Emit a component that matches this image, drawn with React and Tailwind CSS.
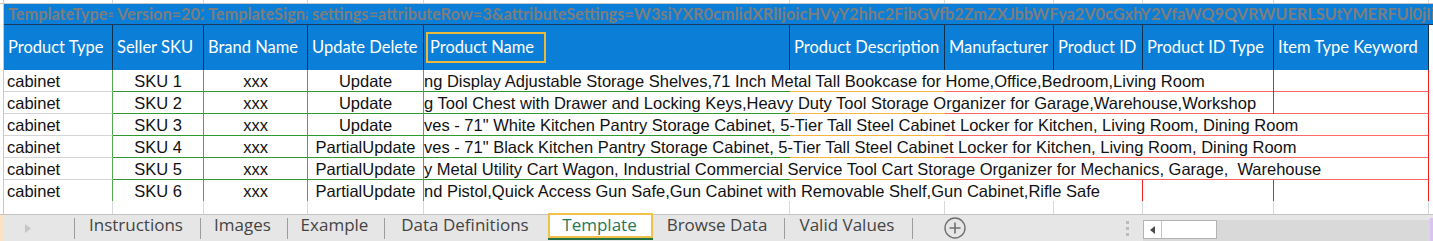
import React from 'react';

const headers = [
  { label: 'Product Type', w: 'w-[109px]' },
  { label: 'Seller SKU', w: 'w-[91px]' },
  { label: 'Brand Name', w: 'w-[104px]' },
  { label: 'Update Delete', w: 'w-[116px]' },
  { label: 'Product Name', w: 'w-[366px]', boxed: true },
  { label: 'Product Description', w: 'w-[155px]' },
  { label: 'Manufacturer', w: 'w-[109px]' },
  { label: 'Product ID', w: 'w-[89px]' },
  { label: 'Product ID Type', w: 'w-[131px]' },
  { label: 'Item Type Keyword', w: 'w-[155px]' },
];

const rows = [
  {
    sku: 'SKU 1',
    op: 'Update',
    span: 'short',
    text: 'ng Display Adjustable Storage Shelves,71 Inch Metal Tall Bookcase for Home,Office,Bedroom,Living Room',
  },
  {
    sku: 'SKU 2',
    op: 'Update',
    span: 'short',
    text: 'g Tool Chest with Drawer and Locking Keys,Heavy Duty Tool Storage Organizer for Garage,Warehouse,Workshop',
  },
  {
    sku: 'SKU 3',
    op: 'Update',
    span: 'long',
    text: 'ves - 71" White Kitchen Pantry Storage Cabinet, 5-Tier Tall Steel Cabinet Locker for Kitchen, Living Room, Dining Room',
  },
  {
    sku: 'SKU 4',
    op: 'PartialUpdate',
    span: 'long',
    text: 'ves - 71" Black Kitchen Pantry Storage Cabinet, 5-Tier Tall Steel Cabinet Locker for Kitchen, Living Room, Dining Room',
  },
  {
    sku: 'SKU 5',
    op: 'PartialUpdate',
    span: 'long',
    text: 'y Metal Utility Cart Wagon, Industrial Commercial Service Tool Cart Storage Organizer for Mechanics, Garage,\u00a0\u00a0Warehouse',
  },
  {
    sku: 'SKU 6',
    op: 'PartialUpdate',
    span: 'none',
    text: 'nd Pistol,Quick Access Gun Safe,Gun Cabinet with Removable Shelf,Gun Cabinet,Rifle Safe',
  },
];

const settings =
  'settings=attributeRow=3&attributeSettings=W3siYXR0cmlidXRlIjoicHVyY2hhc2FibGVfb2ZmZXJbbWFya2V0cGxhY2VfaWQ9QVRWUERLSUtYMERFUl0jIiwiZGF0YVR5cGUiOiJib29sZWFuIn1d';

function Gutter({ className = '' }) {
  return <div className={`w-[4px] shrink-0 border-r border-[#c8c8c8] bg-white ${className}`} />;
}

function TopStrip() {
  return (
    <div className="flex h-[4px] border-b border-[#c8c8c8]">
      <Gutter />
      {headers.map((h) => (
        <div key={h.label} className={`${h.w} shrink-0 border-r border-[#d6d6d6]`} />
      ))}
    </div>
  );
}

function TitleRow() {
  const cell = "shrink-0 overflow-hidden whitespace-nowrap pl-[4px]";
  return (
    <div className="flex h-[21px]">
      <Gutter />
      <div className="flex flex-1 overflow-hidden border-b border-[#163b5e] bg-[#0b7fd7] font-['Lato',sans-serif] text-[16.3px] font-bold leading-[20px] text-[#7d7d7d]">
        <div className={`w-[109px] ${cell}`}>TemplateType=fptcustom</div>
        <div className={`w-[91px] ${cell}`}>Version=2021.0308</div>
        <div className={`w-[104px] ${cell}`}>TemplateSignature=Q0FCSU5FVA==</div>
        <div className="flex-1 overflow-hidden whitespace-nowrap pl-[4px]">{settings}</div>
      </div>
    </div>
  );
}

function HeaderRow() {
  return (
    <div className="flex h-[45px]">
      <Gutter />
      <div className="flex bg-[#0b7fd7] font-['Lato',sans-serif] text-[16.5px] text-white">
        {headers.map((h) => (
          <div
            key={h.label}
            className={`${h.w} flex shrink-0 items-center overflow-hidden whitespace-nowrap border-r border-[#122f4b] ${h.boxed ? 'pl-[2px]' : 'pl-[4px]'}`}
          >
            {h.boxed ? (
              <div className="flex h-[31px] w-[120px] items-center border-2 border-[#e9b83c] pl-[2px]">{h.label}</div>
            ) : (
              h.label
            )}
          </div>
        ))}
      </div>
    </div>
  );
}

function DataRow({ row, last }) {
  const txt = 'whitespace-nowrap overflow-hidden pt-[2px] leading-[19px]';
  const bottom = (color) => (last ? '' : `border-b ${color}`);
  const spanWidth =
    row.span === 'short' ? 'w-[850px]' : row.span === 'long' ? 'w-[1005px]' : 'w-[719px]';

  return (
    <div className={`flex ${last ? 'h-[21px]' : 'h-[22px]'} font-['Liberation_Sans',Arial,sans-serif] text-[16.5px] text-[#111]`}>
      <Gutter />
      <div className={`w-[109px] shrink-0 border-r border-r-[#52a852] pl-[3px] ${txt} ${bottom('border-b-[#d4d4d4]')}`}>
        cabinet
      </div>
      <div className={`w-[91px] shrink-0 border-r border-r-[#52a852] text-center ${txt} ${bottom('border-b-[#2f9a2f]')}`}>
        {row.sku}
      </div>
      <div className={`w-[104px] shrink-0 border-r border-r-[#52a852] text-center ${txt} ${bottom('border-b-[#2f9a2f]')}`}>
        xxx
      </div>
      <div className={`w-[116px] shrink-0 border-r border-r-[#52a852] text-center ${txt} ${bottom('border-b-[#2f9a2f]')}`}>
        {row.op}
      </div>
      <div className={`${spanWidth} flex shrink-0 flex-col border-r border-r-[#f01d1d]`}>
        <div className={`h-[21px] ${txt}`}>{row.text}</div>
        {!last && (
          <div className="flex h-px">
            <div className="w-[366px] bg-[#2f9a2f]" />
            <div className="w-[155px] bg-[#f6b73c]" />
            <div className="flex-1 bg-[#ff6666]" />
          </div>
        )}
      </div>
      {row.span === 'short' && (
        <div className="w-[155px] shrink-0 border-r border-b border-r-[#f01d1d] border-b-[#ff6666]" />
      )}
      {row.span === 'none' && (
        <>
          <div className="w-[131px] shrink-0 border-r border-r-[#f01d1d]" />
          <div className="w-[155px] shrink-0 border-r border-r-[#f01d1d]" />
        </>
      )}
    </div>
  );
}

function EmptyRow() {
  return (
    <div className="flex h-[13px]">
      <Gutter />
      {headers.map((h) => (
        <div key={h.label} className={`${h.w} shrink-0 border-r border-[#d9d9d9]`} />
      ))}
    </div>
  );
}

function Sep() {
  return <div className="mt-[3px] mb-[2px] w-px shrink-0 bg-[#9c9c9c]" />;
}

function Tab({ w, children }) {
  return <div className={`${w} flex shrink-0 justify-center pr-[3px] leading-[20px]`}>{children}</div>;
}

function SheetTabs() {
  return (
    <div className="flex h-[27px] border-t border-[#c3c3c3] bg-[#e6e6e6] font-['Open_Sans',sans-serif] text-[17px] text-[#444]">
      <div className="w-[3px] shrink-0 bg-[#fbe1c6]" />
      <div className="flex w-[71px] shrink-0 items-center pl-[22px]">
        <svg width="6" height="9" viewBox="0 0 6 9">
          <path d="M0 0 L6 4.5 L0 9 Z" fill="#c6c6c6" />
        </svg>
      </div>
      <Sep />
      <Tab w="w-[125px]">Instructions</Tab>
      <Sep />
      <Tab w="w-[86px]">Images</Tab>
      <Sep />
      <Tab w="w-[96px]">Example</Tab>
      <Sep />
      <Tab w="w-[163px]">Data Definitions</Tab>
      <div className="-mt-[2px] flex w-[105px] shrink-0 flex-col">
        <div className="flex h-[25px] justify-center border-2 border-[#f1c24b] bg-white pr-[2px] leading-[20px] text-[#25785a]">
          Template
        </div>
        <div className="h-[2px] bg-[#217346]" />
      </div>
      <Tab w="w-[131px]">Browse Data</Tab>
      <Sep />
      <Tab w="w-[127px]">Valid Values</Tab>
      <Sep />
      <div className="flex w-[213px] shrink-0 items-center pl-[31px]">
        <svg width="22" height="22" viewBox="0 0 22 22">
          <circle cx="11" cy="11" r="10" fill="none" stroke="#707070" strokeWidth="1.4" />
          <path d="M11 5.5 V16.5 M5.5 11 H16.5" stroke="#707070" strokeWidth="1.6" />
        </svg>
      </div>
      <div className="flex w-[3px] shrink-0 flex-col items-center justify-center gap-[3px]">
        <div className="h-[3px] w-[3px] bg-[#bcbcbc]" />
        <div className="h-[3px] w-[3px] bg-[#bcbcbc]" />
        <div className="h-[3px] w-[3px] bg-[#bcbcbc]" />
      </div>
      <div className="w-[14px] shrink-0" />
      <div className="mt-[5px] w-[287px] shrink-0 bg-[#d9d9d9]">
        <div className="flex h-[19px] w-[74px] border border-[#b3b3b3] bg-white">
          <div className="flex w-[18px] items-center justify-center border-r border-[#c4c4c4]">
            <svg width="5" height="8" viewBox="0 0 5 8">
              <path d="M5 0 L0 4 L5 8 Z" fill="#4a4a4a" />
            </svg>
          </div>
        </div>
      </div>
      <div className="mt-[3px] w-[3px] shrink-0 bg-[#dcc2f2]" />
    </div>
  );
}

export default function App() {
  return (
    <div className="flex h-[241px] w-[1433px] flex-col overflow-hidden bg-white">
      <TopStrip />
      <TitleRow />
      <HeaderRow />
      {rows.map((row, i) => (
        <DataRow key={row.sku} row={row} last={i === rows.length - 1} />
      ))}
      <EmptyRow />
      <SheetTabs />
    </div>
  );
}
